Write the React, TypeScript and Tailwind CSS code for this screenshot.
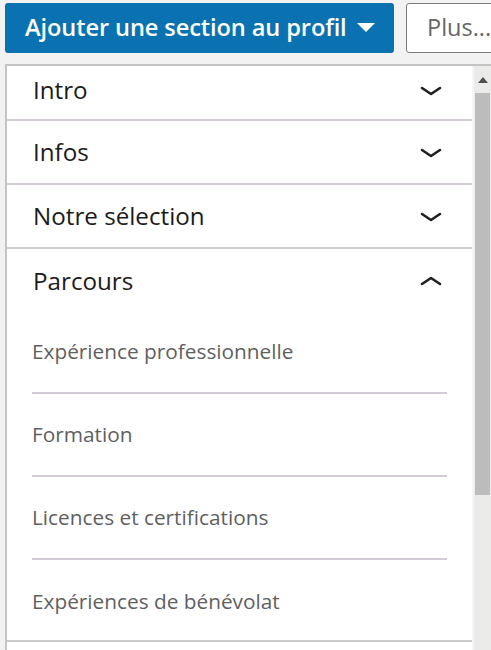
import React from "react";

const font = { fontFamily: '"Open Sans", "Noto Sans", sans-serif' };

function ChevronDown() {
  return (
    <svg width="22" height="10" viewBox="0 0 22 10" className="shrink-0">
      <path d="M2 2 L11 8 L20 2" fill="none" stroke="#1f1f1f" strokeWidth="2.6" strokeLinecap="round" strokeLinejoin="round" />
    </svg>
  );
}

function ChevronUp() {
  return (
    <svg width="22" height="10" viewBox="0 0 22 10" className="shrink-0">
      <path d="M2 8 L11 2 L20 8" fill="none" stroke="#1f1f1f" strokeWidth="2.6" strokeLinecap="round" strokeLinejoin="round" />
    </svg>
  );
}

function Header({ label, open, h }: { label: string; open?: boolean; h: string }) {
  return (
    <div className={`flex items-center justify-between pl-[26px] pr-[30px] ${h}`}>
      <span className="text-[24.2px] font-medium text-[#1b1b1b] leading-none">{label}</span>
      {open ? <ChevronUp /> : <ChevronDown />}
    </div>
  );
}

function SubItem({ label, last }: { label: string; last?: boolean }) {
  return (
    <div className={`ml-[25px] mr-[25px] flex items-center ${last ? "h-[80px] pt-[2px]" : "h-[83px] border-b-2 border-[#d2cbd3]"}`}>
      <span className="text-[20.8px] text-[#5f5f5f] leading-none">{label}</span>
    </div>
  );
}

export default function App() {
  return (
    <div className="w-[491px] h-[650px] overflow-hidden bg-[#f3f2f2] relative" style={font}>
      {/* top buttons */}
      <div className="flex items-start pt-[3px] pl-[5px] gap-[12px]">
        <div className="w-[389px] h-[50px] shrink-0 rounded-[3px] bg-[#0a72b0] flex items-center pl-[20px] gap-[10px]">
          <span className="text-white text-[23.6px] font-semibold leading-none tracking-[-0.1px]">Ajouter une section au profil</span>
          <svg width="18" height="10" viewBox="0 0 18 10">
            <path d="M0 0 H18 L9 9 Z" fill="#ffffff" />
          </svg>
        </div>
        <div className="w-[110px] h-[50px] shrink-0 rounded-[3px] border border-[#7a7a7a] bg-white flex items-center pl-[20px]">
          <span className="text-[#666666] text-[23.5px] leading-none">Plus...</span>
        </div>
      </div>

      {/* panel */}
      <div className="mt-[11px] ml-[5px] flex border-t-2 border-l-2 border-[#c4c4c4] h-[600px]">
        <div className="w-[465px] bg-white flex flex-col">
          <div className="border-b-2 border-[#d2cbd3]">
            <Header label="Intro" h="h-[53px] pb-[4px]" />
          </div>
          <div className="border-b-2 border-[#d2cbd3]">
            <Header label="Infos" h="h-[62px] pt-[1px]" />
          </div>
          <div className="border-b-2 border-[#cbcbcb]">
            <Header label="Notre sélection" h="h-[62px] pt-[1px]" />
          </div>
          <div className="border-b-2 border-[#cbcbcb]">
            <Header label="Parcours" h="h-[62px] pt-[2px]" open />
            <div>
              <SubItem label="Expérience professionnelle" />
              <SubItem label="Formation" />
              <SubItem label="Licences et certifications" />
              <SubItem label="Expériences de bénévolat" last />
            </div>
          </div>
          <div className="h-[20px]" />
        </div>
        {/* scrollbar */}
        <div className="w-[2px] bg-[#f6f6f6]" />
        <div className="flex-1 flex flex-col bg-[#ebebea]">
          <div className="h-[27px] flex items-center justify-center">
            <svg width="10" height="6" viewBox="0 0 10 6">
              <path d="M0 6 L5 0 L10 6 Z" fill="#505050" />
            </svg>
          </div>
          <div className="h-[402px] mx-[1px] bg-[#bcbcbc]" />
        </div>
      </div>
    </div>
  );
}
